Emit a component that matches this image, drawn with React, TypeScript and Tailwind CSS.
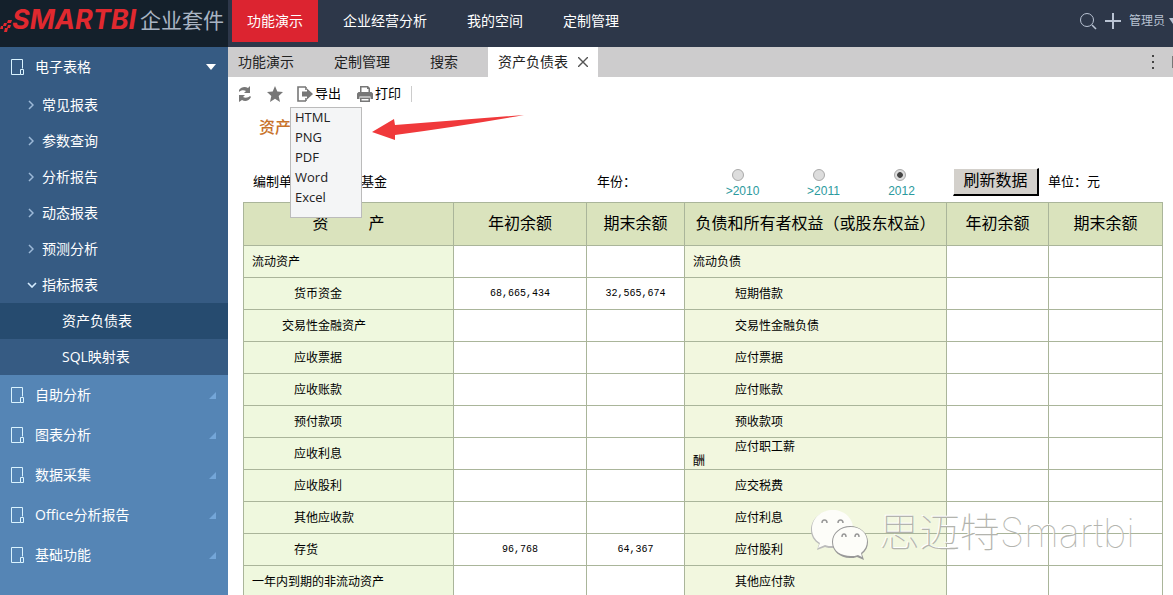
import { useState } from "react";

interface ReportRow {
  asset: string;
  assetIndent?: string;
  begin?: string;
  end?: string;
  debt: string[];
  debtIndent?: string;
}

const topMenus = ["企业经营分析", "我的空间", "定制管理"];
const tabs = ["功能演示", "定制管理", "搜索"];
const reportGroups = ["常见报表", "参数查询", "分析报告", "动态报表", "预测分析"];
const sideGroups = ["自助分析", "图表分析", "数据采集", "Office分析报告", "基础功能"];
const exportTypes = ["HTML", "PNG", "PDF", "Word", "Excel"];
const years = ["2010", "2011", "2012"];

const DEEP = "indent-[42px]";
const MID = "indent-[30px]";

const rows: ReportRow[] = [
  { asset: "流动资产", debt: ["流动负债"] },
  {
    asset: "货币资金",
    assetIndent: DEEP,
    begin: "68,665,434",
    end: "32,565,674",
    debt: ["短期借款"],
    debtIndent: DEEP,
  },
  { asset: "交易性金融资产", assetIndent: MID, debt: ["交易性金融负债"], debtIndent: DEEP },
  { asset: "应收票据", assetIndent: DEEP, debt: ["应付票据"], debtIndent: DEEP },
  { asset: "应收账款", assetIndent: DEEP, debt: ["应付账款"], debtIndent: DEEP },
  { asset: "预付款项", assetIndent: DEEP, debt: ["预收款项"], debtIndent: DEEP },
  { asset: "应收利息", assetIndent: DEEP, debt: ["应付职工薪", "酬"], debtIndent: DEEP },
  { asset: "应收股利", assetIndent: DEEP, debt: ["应交税费"], debtIndent: DEEP },
  { asset: "其他应收款", assetIndent: DEEP, debt: ["应付利息"], debtIndent: DEEP },
  {
    asset: "存货",
    assetIndent: DEEP,
    begin: "96,768",
    end: "64,367",
    debt: ["应付股利"],
    debtIndent: DEEP,
  },
  { asset: "一年内到期的非流动资产", debt: ["其他应付款"], debtIndent: DEEP },
];

function DoorIcon() {
  return (
    <svg width="14" height="18" viewBox="0 0 14 18" fill="none" stroke="#d9f3ff">
      <path d="M12.5 10.5v-9h-11v15h9M10.5 16.500v-5h3v5z" />
    </svg>
  );
}

function Header() {
  return (
    <header className="flex h-[47px] shrink-0 bg-[#2d3749] text-sm text-white">
      <div className="flex w-[228px] shrink-0 items-center gap-1 bg-[#14202b] pb-2 whitespace-nowrap">
        <div className="flex w-[136px] shrink-0 items-center">
          <svg width="12" height="14" viewBox="0 0 12 14" fill="#e0292f" className="mt-3 shrink-0">
            <path d="M8 1h4l-1 3H7zM4 4h3l-1 3H3zM8 6h3l-1 3H7zM1 7h2v3H0zM5 9h3l-1 4H4z" />
          </svg>
          <span className="font-[Inter,sans-serif] text-[27px] leading-9 font-bold text-[#e0292f] italic">
            SMARTBI
          </span>
        </div>
        <span className="text-[21px] leading-9 text-[#a9b4c3]">企业套件</span>
      </div>
      <nav className="flex h-[42px] grow">
        <a href="#demo" className="mr-[5px] ml-1 flex items-center bg-[#dc2430] px-[15px]">
          功能演示
        </a>
        {topMenus.map((menu) => (
          <a key={menu} href="#menu" className="flex items-center px-5">
            {menu}
          </a>
        ))}
      </nav>
      <div className="flex h-[42px] shrink-0 items-center text-[#b9c3d3]">
        <button type="button" aria-label="搜索" className="mr-2">
          <svg width="18" height="18" viewBox="0 0 18 18" fill="none" stroke="currentColor">
            <circle cx="8" cy="8" r="6.500" />
            <path d="m13 13 4 4" strokeWidth="1.600" />
          </svg>
        </button>
        <button type="button" aria-label="新建" className="mr-2">
          <svg width="16" height="16" viewBox="0 0 16 16" stroke="currentColor" strokeWidth="2">
            <path d="M8 0v16M0 8h16" />
          </svg>
        </button>
        <button type="button" className="flex items-center gap-1 text-xs">
          管理员
          <svg width="4" height="6" viewBox="0 0 4 6" fill="currentColor">
            <path d="M0 0h4v6z" />
          </svg>
        </button>
      </div>
    </header>
  );
}

function Sidebar() {
  return (
    <aside className="w-[228px] shrink-0 bg-[#5585b5] text-sm text-white">
      <div className="bg-[#365b83]">
        <a href="#sheet" className="flex h-10 items-center pr-3 pl-[10px]">
          <DoorIcon />
          <span className="ml-[11px] grow">电子表格</span>
          <svg width="10" height="6" viewBox="0 0 10 6" fill="#fff">
            <path d="M0 0h10L5 6z" />
          </svg>
        </a>
        {reportGroups.map((group) => (
          <a key={group} href="#group" className="flex h-9 items-center gap-2 pl-7">
            <svg width="6" height="10" viewBox="0 0 6 10" fill="none" stroke="#9db9d8" strokeWidth="1.500">
              <path d="m1 1 4 4-4 4" />
            </svg>
            {group}
          </a>
        ))}
        <a href="#group" className="flex h-9 items-center gap-[5px] pl-[27px]">
          <svg width="10" height="6" viewBox="0 0 10 6" fill="none" stroke="#d5ecff" strokeWidth="1.600">
            <path d="m1 1 4 4 4-4" />
          </svg>
          指标报表
        </a>
        <a href="#balance" className="flex h-9 items-center bg-[#264b6f] pl-[62px]">
          资产负债表
        </a>
        <a href="#sql" className="flex h-9 items-center pl-[62px]">
          SQL映射表
        </a>
      </div>
      {sideGroups.map((group) => (
        <a key={group} href="#side" className="flex h-10 items-center pr-3 pl-[10px]">
          <DoorIcon />
          <span className="ml-[11px] grow">{group}</span>
          <svg width="7" height="7" viewBox="0 0 7 7" fill="#74a6d8">
            <path d="M7 0v7H0z" />
          </svg>
        </a>
      ))}
    </aside>
  );
}

function TabBar() {
  return (
    <div className="flex h-[30px] shrink-0 gap-5 bg-[#cdcccd] text-sm text-[#222]">
      {tabs.map((tab) => (
        <button key={tab} type="button" className="px-[10px]">
          {tab}
        </button>
      ))}
      <div className="flex items-center gap-[10px] bg-white px-[10px]">
        资产负债表
        <button type="button" aria-label="关闭">
          <svg width="10" height="10" viewBox="0 0 10 10" stroke="#555" strokeWidth="1.400">
            <path d="m0 0 10 10M10 0 0 10" />
          </svg>
        </button>
      </div>
      <div className="flex grow items-center justify-end gap-[18px]">
        <svg width="2" height="14" viewBox="0 0 2 14" fill="#444">
          <path d="M0 0h2v2H0zM0 6h2v2H0zM0 12h2v2H0z" />
        </svg>
        <span className="h-3 w-px bg-[#777]" />
      </div>
    </div>
  );
}

function Toolbar() {
  return (
    <div className="flex h-[33px] shrink-0 items-center pl-[10px] text-[13px] text-black">
      <button type="button" aria-label="刷新" className="mr-[15px]">
        <svg width="14" height="16" viewBox="0 0 14 16" fill="#777">
          <path d="M1 4c2-3 6-4 9-2l2-2v7H6l2-2C6 4 3 4 1 6zM13 11c-2 4-6 5-9 3l-3 2V9h6l-2 2c2 1 5 1 7-1z" />
        </svg>
      </button>
      <button type="button" aria-label="收藏" className="mr-[14px]">
        <svg width="16" height="16" viewBox="0 0 16 16" fill="#777">
          <path d="m8 0 2.300 5.500 5.700.5-4.300 3.900L13 16l-5-3.300L3 16l1.300-6.100L0 6l5.700-.5z" />
        </svg>
      </button>
      <div className="relative mr-4">
        <button type="button" className="flex items-center gap-[2px]">
          <svg width="16" height="16" viewBox="0 0 16 16">
            <path d="M9 1H1v14h8M9 1v3M9 15v-3" fill="none" stroke="#777" strokeWidth="1.600" />
            <path d="M5 5.500h5V2.500l6 5.500-6 5.500v-3H5z" fill="#777" />
          </svg>
          导出
        </button>
        <ul className="absolute top-[23px] -left-[7px] z-10 h-[111px] w-[72px] border border-[#bbb] bg-[#f4f5f6] font-['Open_Sans',sans-serif] text-[13px] leading-5 text-[#222]">
          {exportTypes.map((type) => (
            <li key={type} className="-mt-px mb-px pl-1">
              {type}
            </li>
          ))}
        </ul>
      </div>
      <button type="button" className="mr-[10px] flex items-center gap-[2px]">
        <svg width="16" height="16" viewBox="0 0 16 16" fill="#777">
          <path d="M3 0h8l2 2v4h-1.500V3H10V1.500H4.500V6H3z" />
          <path d="M1.500 6h13L16 7.500V13h-2.500v-2.500h-11V13H0V7.500z" />
          <path d="M3 11.500h10V16H3zM4.500 13v1.500h7V13z" fillRule="evenodd" />
        </svg>
        打印
      </button>
      <span className="h-4 w-px bg-[#ccc]" />
    </div>
  );
}

function FilterBar() {
  const [year, setYear] = useState("2012");

  return (
    <div className="flex h-[53px] items-center pt-3 pl-[10px] text-[13px] whitespace-nowrap text-black">
      <span className="w-[108px] shrink-0">编制单位：</span>
      <span className="w-[236px] shrink-0">基金</span>
      <span className="w-[100px] shrink-0">年份：</span>
      <div className="flex shrink-0 pt-1">
        {years.map((item) => (
          <label
            key={item}
            className="flex w-[81px] flex-col items-center gap-[2px] text-xs leading-4 text-[#2c9a9e]"
          >
            <input
              type="radio"
              name="year"
              value={item}
              checked={year === item}
              onChange={() => setYear(item)}
              className="h-3 w-3 appearance-none rounded-full border border-[#aaa] bg-[#ddd] bg-radial from-[#ddd] to-[#ddd] checked:from-[#444] checked:from-35% checked:to-[#ddd] checked:to-45%"
            />
            <span className={year === item ? "pl-1" : "pl-[10px]"}>
              {year === item ? item : `>${item}`}
            </span>
          </label>
        ))}
      </div>
      <button
        type="button"
        className="mr-[9px] ml-[13px] h-7 w-[86px] shrink-0 border-t border-r-2 border-b-2 border-l border-t-white border-r-black border-b-black border-l-white bg-[#d3d0cb] text-base leading-6"
      >
        刷新数据
      </button>
      <span>单位：元</span>
    </div>
  );
}

function BalanceTable() {
  return (
    <table className="w-full table-fixed border-collapse text-xs leading-[14px] text-black">
      <colgroup>
        <col className="w-[210px]" />
        <col className="w-[133px]" />
        <col className="w-[98px]" />
        <col className="w-[262px]" />
        <col className="w-[102px]" />
        <col className="w-[114px]" />
      </colgroup>
      <thead>
        <tr className="h-[43px] bg-[#dae3bd] text-base whitespace-nowrap *:border *:border-[#aab59a] *:font-normal">
          <th>
            <span className="flex justify-center gap-10">
              <span>资</span>
              <span>产</span>
            </span>
          </th>
          <th>年初余额</th>
          <th>期末余额</th>
          <th>负债和所有者权益（或股东权益）</th>
          <th>年初余额</th>
          <th>期末余额</th>
        </tr>
      </thead>
      <tbody>
        {rows.map((row) => (
          <tr key={row.asset} className="h-8 *:border *:border-[#aab59a]">
            <td className="bg-[#eff8de] pl-2">
              <div className={row.assetIndent}>{row.asset}</div>
            </td>
            <td className="text-center font-['Liberation_Mono',monospace] text-[10px]">{row.begin}</td>
            <td className="text-center font-['Liberation_Mono',monospace] text-[10px]">{row.end}</td>
            <td className="bg-[#f2f7df] pl-2">
              <div className={row.debtIndent}>
                {row.debt[0]}
                {row.debt[1] && <br />}
                {row.debt[1]}
              </div>
            </td>
            <td></td>
            <td></td>
          </tr>
        ))}
      </tbody>
    </table>
  );
}

function Watermark() {
  return (
    <div className="pointer-events-none absolute right-[38px] bottom-[34px] flex items-end gap-[10px] whitespace-nowrap">
      <svg width="60" height="52" viewBox="0 0 60 52">
        <g fill="#bbb">
          <path d="M22 2C10 2 1 10 1 21c0 6 3 11 8 14l-2 6 8-3c2 1 5 1 8 1 11 0 20-8 20-18S34 2 22 2z" />
        </g>
        <g fill="#fdfdf9">
          <path d="M23 1C11 1 2 9 2 20c0 6 3 11 8 14l-2 5 7-3c2 1 5 1 8 1 11 0 20-8 20-18S34 1 23 1z" />
        </g>
        <path
          d="M40 17c-10 0-18 7-18 16s8 16 18 16c2 0 5 0 7-1l7 3-2-6c4-3 6-7 6-12 0-9-8-16-18-16z"
          fill="#999"
        />
        <path
          d="M41 18c-10 0-18 6-18 15s8 14 18 14c2 0 5 0 7-1l4 2-1-4c4-3 6-7 6-12 0-8-7-14-16-14z"
          fill="#fdfdf9"
        />
        <g fill="none" stroke="#999" strokeWidth="1.500">
          <path d="M12 14c0-4 5-4 5 0M28 14c0-4 5-4 5 0M32 28c0-4 4-4 4 0M45 28c0-4 4-4 4 0" />
        </g>
      </svg>
      <span className="pb-1 font-[Inter,'Noto_Sans_CJK_SC',sans-serif] text-[40px] leading-[48px] font-thin text-[#b3b4ae] text-shadow-[-1px_-1px_0_#fff]">
        思迈特Smartbi
      </span>
    </div>
  );
}

export default function App() {
  return (
    <div className="flex h-screen flex-col overflow-hidden bg-white font-['Open_Sans','Noto_Sans_CJK_SC',sans-serif]">
      <Header />
      <div className="flex min-h-0 grow">
        <Sidebar />
        <main className="relative flex min-w-0 grow flex-col overflow-hidden">
          <TabBar />
          <Toolbar />
          <section className="min-h-0 grow pr-3 pl-[15px] font-['Liberation_Sans','Noto_Sans_CJK_SC',sans-serif]">
            <h1 className="h-[39px] pl-4 text-base leading-9 font-medium text-[#c8722a]">资产负债表</h1>
            <FilterBar />
            <BalanceTable />
          </section>
          <svg
            width="154"
            height="28"
            viewBox="0 0 154 28"
            fill="#f0393b"
            className="pointer-events-none absolute top-[67px] left-36"
          >
            <path d="m0 18 22-13 1 6L152 1Q90 12 23 21v5z" />
          </svg>
          <Watermark />
        </main>
      </div>
    </div>
  );
}
